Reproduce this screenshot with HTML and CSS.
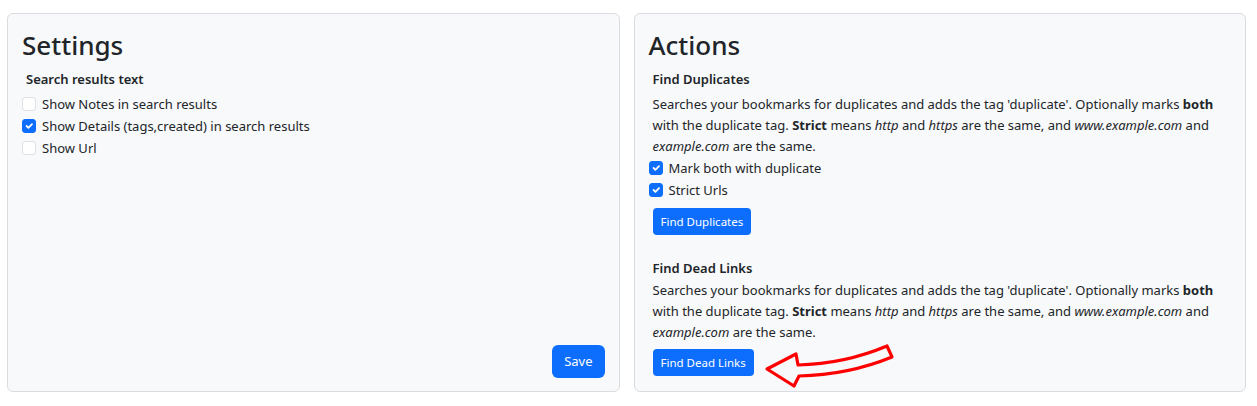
FILE: index.html
```html
<!DOCTYPE html>
<html lang="en">

<head>
  <meta charset="UTF-8">
  <meta name="viewport" content="width=device-width, initial-scale=1.0">
  <title>Options</title>
  <link rel="stylesheet" href="styles.css">
</head>

<body>
  <div class="page">
    <!-- 设置 -->
    <div class="card">
      <h3 class="card-title">Settings</h3>
      <div class="group">
        <div class="group-title">Search results text</div>
        <label class="check">
          <input type="checkbox">
          <span>Show Notes in search results</span>
        </label>
        <label class="check">
          <input type="checkbox" checked>
          <span>Show Details (tags,created) in search results</span>
        </label>
        <label class="check">
          <input type="checkbox">
          <span>Show Url</span>
        </label>
      </div>
      <div class="card-footer">
        <button class="btn">Save</button>
      </div>
    </div>

    <!-- 操作 -->
    <div class="card">
      <h3 class="card-title">Actions</h3>

      <div class="action">
        <div class="action-title">Find Duplicates</div>
        <p>Searches your bookmarks for duplicates and adds the tag 'duplicate'. Optionally marks <b>both</b> with the
          duplicate tag. <b>Strict</b> means <i>http</i> and <i>https</i> are the same, and <i>www.example.com</i> and
          <i>example.com</i> are the same.</p>
        <label class="check check-out">
          <input type="checkbox" checked>
          <span>Mark both with duplicate</span>
        </label>
        <label class="check check-out">
          <input type="checkbox" checked>
          <span>Strict Urls</span>
        </label>
        <div class="action-row">
          <button class="btn btn-sm">Find Duplicates</button>
        </div>
      </div>

      <div class="action">
        <div class="action-title">Find Dead Links</div>
        <p>Searches your bookmarks for duplicates and adds the tag 'duplicate'. Optionally marks <b>both</b> with the
          duplicate tag. <b>Strict</b> means <i>http</i> and <i>https</i> are the same, and <i>www.example.com</i> and
          <i>example.com</i> are the same.</p>
        <div class="action-row">
          <button class="btn btn-sm">Find Dead Links</button>
          <!-- 红色箭头标注 -->
          <svg class="pointer" width="140" height="50" viewBox="0 0 140 50">
            <path d="M7 29 L36 14 L38 25 Q84 24 127 6 L132 17 Q88 35 39 36 L34 46 Z" />
          </svg>
        </div>
      </div>
    </div>
  </div>
</body>

</html>
```

FILE: styles.css
```css
html,
body {
  margin: 0;
  padding: 0;
  background-color: #fff;
}

body {
  font-family: "Noto Sans", "Liberation Sans", sans-serif;
  font-size: 13px;
  line-height: 21px;
  color: #212529;
}

.page {
  display: grid;
  grid-template-columns: 1fr 1fr;
  gap: 14px;
  padding: 13px 11px 0 7px;
}

.card {
  display: flex;
  flex-direction: column;
  padding: 14px 14px 15px;
  background-color: #f8f9fa;
  border: 1px solid #dadcdf;
  border-radius: 6px;
}

.card-title {
  margin: 0 0 7px;
  font-size: 26px;
  line-height: 34px;
  font-weight: 500;
}

.group-title,
.action-title {
  padding-left: 4px;
  margin-bottom: 3px;
  font-weight: 600;
}

.check {
  display: flex;
  align-items: center;
  gap: 6px;
  height: 22px;
}

.check input {
  appearance: none;
  -webkit-appearance: none;
  margin: 0;
  width: 14px;
  height: 14px;
  border: 1px solid #dee2e6;
  border-radius: 3px;
  background-color: #fff;
}

.check input:checked {
  border-color: #0d6efd;
  background-color: #0d6efd;
  background-image: url("data:image/svg+xml,%3csvg xmlns='http://www.w3.org/2000/svg' viewBox='0 0 20 20'%3e%3cpath fill='none' stroke='%23fff' stroke-linecap='round' stroke-linejoin='round' stroke-width='3' d='m6 10 3 3 6-6'/%3e%3c/svg%3e");
  background-size: 100% 100%;
}

.card-footer {
  display: flex;
  justify-content: flex-end;
  margin-top: auto;
  margin-bottom: -2px;
}

.btn {
  padding: 6px 12px;
  font-family: inherit;
  font-size: 13px;
  line-height: 21px;
  color: #fff;
  background-color: #0d6efd;
  border: 0;
  border-radius: 6px;
}

.btn-sm {
  padding: 4px 8px;
  font-size: 11.5px;
  line-height: 19px;
  border-radius: 4px;
}

.action {
  padding-left: 4px;
}

.action + .action {
  margin-top: 23px;
}

.action .action-title {
  padding-left: 0;
  margin-bottom: 4px;
}

.action + .action .action-title {
  margin-bottom: 1px;
}

.action p {
  margin: 0;
}

.check-out {
  margin-left: -4px;
}

.action-row {
  position: relative;
  margin-top: 7px;
}

.action p + .action-row {
  margin-top: 6px;
}

.pointer {
  position: absolute;
  left: 107px;
  top: -9px;
}

.pointer path {
  fill: none;
  stroke: #f00;
  stroke-width: 3.2;
  stroke-linejoin: round;
}
```
